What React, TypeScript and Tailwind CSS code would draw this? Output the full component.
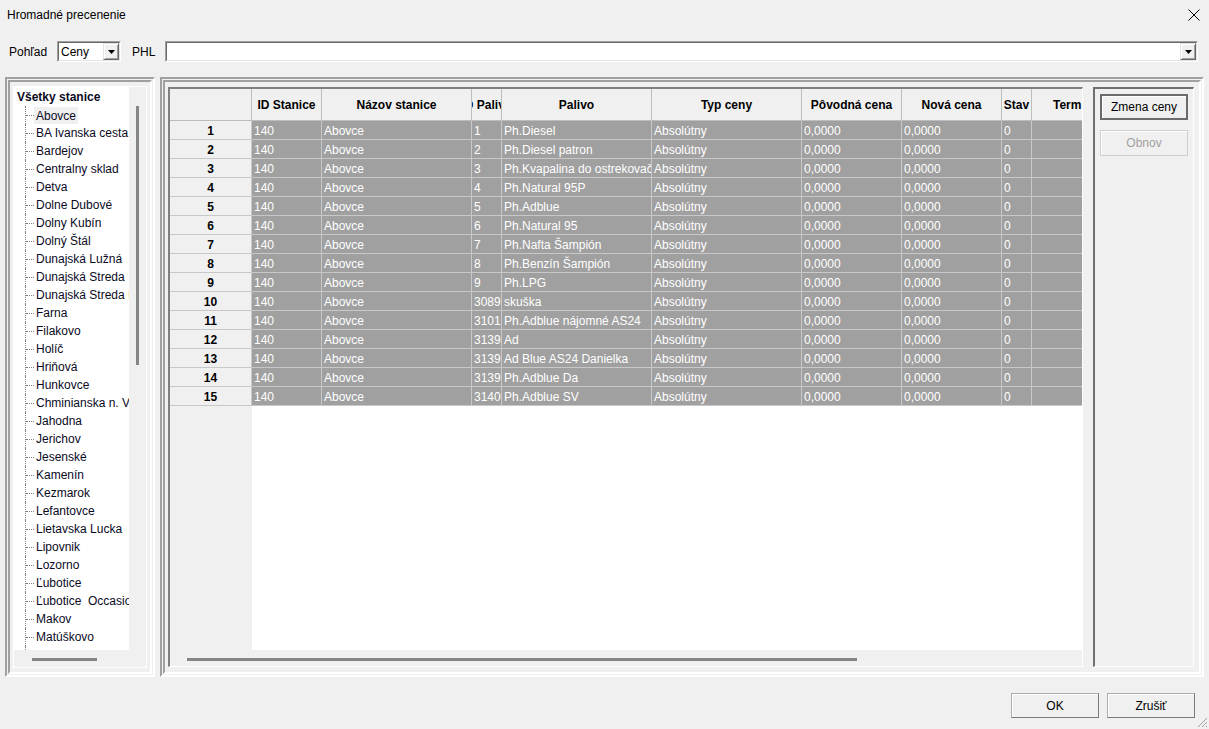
import React from 'react';

const stations = [
  'Abovce', 'BA Ivanska cesta', 'Bardejov', 'Centralny sklad', 'Detva', 'Dolne Dubové', 'Dolny Kubín', 'Dolný Štál',
  'Dunajská Lužná', 'Dunajská Streda', 'Dunajská Streda II', 'Farna', 'Filakovo', 'Holíč', 'Hriňová', 'Hunkovce',
  'Chminianska n. Ves', 'Jahodna', 'Jerichov', 'Jesenské', 'Kamenín', 'Kezmarok', 'Lefantovce', 'Lietavska Lucka',
  'Lipovnik', 'Lozorno', 'Ľubotice', 'Ľubotice  Occasion', 'Makov', 'Matúškovo', 'Medzilaborce',
];

const fuels: [string, string][] = [
  ['1', 'Ph.Diesel'],
  ['2', 'Ph.Diesel patron'],
  ['3', 'Ph.Kvapalina do ostrekovačov'],
  ['4', 'Ph.Natural 95P'],
  ['5', 'Ph.Adblue'],
  ['6', 'Ph.Natural 95'],
  ['7', 'Ph.Nafta Šampión'],
  ['8', 'Ph.Benzín Šampión'],
  ['9', 'Ph.LPG'],
  ['30891', 'skuška'],
  ['31013', 'Ph.Adblue nájomné AS24'],
  ['31394', 'Ad'],
  ['31399', 'Ad Blue AS24 Danielka'],
  ['31395', 'Ph.Adblue Da'],
  ['31401', 'Ph.Adblue SV'],
];

// column widths include the 1px right grid line
const cols = [
  { title: 'ID Stanice', w: 'w-[70px]' },
  { title: 'Názov stanice', w: 'w-[150px]' },
  { title: 'ID Paliva', w: 'w-[30px]' },
  { title: 'Palivo', w: 'w-[150px]' },
  { title: 'Typ ceny', w: 'w-[150px]' },
  { title: 'Pôvodná cena', w: 'w-[100px]' },
  { title: 'Nová cena', w: 'w-[100px]' },
  { title: 'Stav', w: 'w-[30px]' },
  { title: 'Termín od', w: 'w-[100px]' },
];

function Arrow() {
  return (
    <svg width="7" height="4" viewBox="0 0 7 4">
      <polygon points="0,0 7,0 3.5,4" fill="#000" />
    </svg>
  );
}

function Combo({ width, text }: { width: string; text?: string }) {
  return (
    <div className={`${width} h-[21px] shrink-0 border border-t-[#a0a0a0] border-l-[#a0a0a0] border-r-white border-b-white`}>
      <div className="h-full flex bg-white border border-t-[#696969] border-l-[#696969] border-r-[#e3e3e3] border-b-[#e3e3e3]">
        <div className="flex-1 flex items-center pl-[2px] whitespace-nowrap overflow-hidden">{text}</div>
        <div className="w-[16px] h-full flex items-center justify-center bg-[#f0f0f0] border border-t-[#e3e3e3] border-l-[#e3e3e3] border-r-[#696969] border-b-[#696969] shadow-[inset_1px_1px_0_#fff,inset_-1px_-1px_0_#a0a0a0]">
          <Arrow />
        </div>
      </div>
    </div>
  );
}

function Frame({ className, children }: { className: string; children: React.ReactNode }) {
  return (
    <div className={`${className} shrink-0 border-2 border-t-[#a0a0a0] border-l-[#a0a0a0] border-r-white border-b-white p-[1px]`}>
      <div className="h-full border-2 border-t-[#a0a0a0] border-l-[#a0a0a0] border-r-white border-b-white">
        {children}
      </div>
    </div>
  );
}

function Button({ label, variant }: { label: string; variant?: 'default' | 'disabled' }) {
  if (variant === 'default') {
    return (
      <div className="w-[88px] h-[26px] flex items-center justify-center border-2 border-[#6b6b6b] bg-[#f0f0f0] shadow-[inset_1px_1px_0_#fff]">
        {label}
      </div>
    );
  }
  if (variant === 'disabled') {
    return (
      <div className="w-[88px] h-[26px] flex items-center justify-center border border-[#cfcfcf] bg-[#f0f0f0] text-[#a0a0a0] shadow-[inset_1px_1px_0_#fff]">
        {label}
      </div>
    );
  }
  return (
    <div className="w-[88px] h-[25px] flex items-center justify-center border border-[#adadad] border-r-[#7a7a7a] border-b-[#7a7a7a] bg-[#f0f0f0] shadow-[inset_1px_1px_0_#fff]">
      {label}
    </div>
  );
}

function StationTree() {
  return (
    <div className="h-full border border-white flex flex-col">
      <div className="flex-1 flex min-h-0">
        <div className="w-[115px] bg-white overflow-hidden pt-[1px] text-[#0a0a1e]">
          <div className="h-[18px] flex items-center pl-[3px] font-bold whitespace-nowrap">Všetky stanice</div>
          {stations.map((s, i) => (
            <div key={s} className="h-[18px] flex">
              <div className="w-[11px] shrink-0" />
              <div className="w-[9px] shrink-0 h-full border-l border-dotted border-[#808080] flex items-center">
                <div className="w-[8px] border-t border-dotted border-[#808080]" />
              </div>
              <div
                className={`flex items-center px-[2px] whitespace-pre ${i === 0 ? 'bg-[#f0f0f0] h-[17px] mt-[1px]' : ''}`}
              >
                {s}
              </div>
            </div>
          ))}
        </div>
        <div className="w-[17px] flex pl-[7px] pt-[19px]">
          <div className="w-[3px] h-[259px] bg-[#858585]" />
        </div>
      </div>
      <div className="h-[17px] pl-[18px] pt-[8px]">
        <div className="w-[65px] h-[3px] bg-[#858585]" />
      </div>
    </div>
  );
}

function PriceGrid() {
  return (
    <div className="w-[915px] h-full shrink-0 border-t-2 border-l-2 border-t-[#808080] border-l-[#808080] border-r border-b border-r-white border-b-white flex flex-col">
      <div className="h-[561px] overflow-hidden flex flex-col">
        <div className="h-[32px] flex shrink-0 bg-[#f0f0f0] font-bold border-b border-[#bdbdbd]">
          <div className="w-[82px] shrink-0 border-r border-[#bdbdbd]" />
          {cols.map(c => (
            <div
              key={c.title}
              className={`${c.w} shrink-0 border-r border-[#bdbdbd] flex items-center justify-center whitespace-nowrap overflow-hidden`}
            >
              {c.title}
            </div>
          ))}
        </div>
        {fuels.map(([id, name], i) => {
          const cells = ['140', 'Abovce', id, name, 'Absolútny', '0,0000', '0,0000', '0', ''];
          return (
            <div key={i} className="h-[19px] flex shrink-0">
              <div className="w-[82px] shrink-0 bg-[#f0f0f0] border-r border-b border-[#c8c8c8] flex items-center justify-center pt-[1px] font-bold">
                {i + 1}
              </div>
              {cols.map((c, j) => (
                <div
                  key={j}
                  className={`${c.w} shrink-0 bg-[#a0a0a0] text-white border-r border-b border-[#c8c8c8] flex items-center pl-[2px] pt-[1px] whitespace-nowrap overflow-hidden`}
                >
                  {cells[j]}
                </div>
              ))}
            </div>
          );
        })}
        <div className="flex-1 flex">
          <div className="w-[82px] bg-[#f0f0f0]" />
          <div className="flex-1 bg-white" />
        </div>
      </div>
      <div className="flex-1 pl-[17px] pt-[8px]">
        <div className="w-[670px] h-[3px] bg-[#858585]" />
      </div>
    </div>
  );
}

export default function App() {
  return (
    <div className="relative w-[1209px] h-[729px] overflow-hidden bg-[#f0f0f0] text-black text-[12px] font-['Liberation_Sans',Arial,sans-serif] flex flex-col">
      {/* title bar */}
      <div className="h-[28px] flex items-center justify-between pl-[7px] pr-[9px] pt-[1px] shrink-0">
        <span>Hromadné precenenie</span>
        <svg width="12" height="12" viewBox="0 0 12 12">
          <path d="M0.5 0.5 L11.5 11.5 M11.5 0.5 L0.5 11.5" stroke="#000" strokeWidth="1" />
        </svg>
      </div>

      {/* filter row */}
      <div className="mt-[13px] h-[21px] flex items-center shrink-0">
        <div className="w-[57px] pl-[9px]">Pohľad</div>
        <Combo width="w-[64px]" text="Ceny" />
        <div className="w-[44px] pl-[11px]">PHL</div>
        <Combo width="w-[1033px]" />
      </div>

      {/* main area */}
      <div className="mt-[15px] h-[600px] flex gap-[5px] px-[5px] shrink-0">
        <Frame className="w-[150px] h-full">
          <div className="h-full px-[3px] pt-[4px] pb-[4px]">
            <StationTree />
          </div>
        </Frame>
        <Frame className="w-[1044px] h-full">
          <div className="h-full flex pl-[3px] pr-[5px] py-[5px] gap-[10px]">
            <PriceGrid />
            <div className="w-[101px] h-full shrink-0 border-t-2 border-l-2 border-t-[#6f6f6f] border-l-[#6f6f6f] border-r border-b border-r-white border-b-white pl-[5px] pt-[5px] flex flex-col gap-[10px]">
              <Button label="Zmena ceny" variant="default" />
              <Button label="Obnov" variant="disabled" />
            </div>
          </div>
        </Frame>
      </div>

      {/* dialog buttons */}
      <div className="mt-[16px] flex justify-end gap-[8px] pr-[14px]">
        <Button label="OK" />
        <Button label="Zrušiť" />
      </div>

      {/* size grip */}
      <svg className="absolute right-[1px] bottom-[1px]" width="11" height="11" viewBox="0 0 11 11">
        <path d="M10 1 L1 10 M10 5 L5 10 M10 9 L9 10" stroke="#a0a0a0" strokeWidth="1" />
      </svg>
    </div>
  );
}
